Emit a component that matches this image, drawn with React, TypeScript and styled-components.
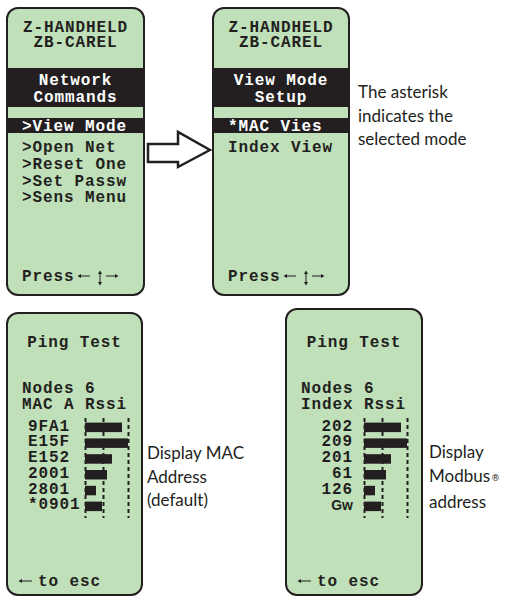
import styled, { createGlobalStyle } from "styled-components";

const INK = "#231f20";
const LCD = "#bfe0b9";

const GlobalStyle = createGlobalStyle`
  html, body {
    margin: 0;
    padding: 0;
    background: #fff;
  }
`;

const Page = styled.div`
  box-sizing: border-box;
  width: 507px;
  height: 598px;
  padding: 7px 0 0 6px;
  display: flex;
  flex-direction: column;
  gap: 12px;
  overflow: hidden;
`;

const Row = styled.div`
  display: flex;
  align-items: flex-start;
`;

const Screen = styled.div<{ $w: number; $h: number; $top?: number }>`
  box-sizing: border-box;
  flex: none;
  width: ${(p) => p.$w}px;
  height: ${(p) => p.$h}px;
  margin-top: ${(p) => p.$top ?? 0}px;
  border: 2px solid ${INK};
  border-radius: 12px;
  background: ${LCD};
  display: flex;
  flex-direction: column;
  font-family: "Liberation Mono", "Courier New", monospace;
  font-weight: 700;
  font-size: 16px;
  letter-spacing: 0.9px;
  color: ${INK};
  white-space: pre;
  overflow: hidden;
`;

const Title = styled.div`
  padding-top: 12px;
  line-height: 14.5px;
  text-align: center;
`;

const Band = styled.div`
  box-sizing: border-box;
  margin-top: 18px;
  height: 39px;
  padding-top: 5px;
  background: ${INK};
  color: #fff;
  line-height: 16.5px;
  text-align: center;
`;

const Selected = styled.div`
  box-sizing: border-box;
  margin-top: 11px;
  height: 15px;
  padding: 2px 0 0 14px;
  background: ${INK};
  color: #fff;
  line-height: 15px;
`;

const Menu = styled.div`
  margin-top: 7px;
  padding-left: 14px;
  line-height: 16.8px;
`;

const Footer = styled.div<{ $left?: number }>`
  margin-top: auto;
  margin-bottom: ${(p) => (p.$left ? 4 : 9)}px;
  height: 16px;
  padding-left: ${(p) => p.$left ?? 14}px;
  line-height: 16px;

  svg {
    display: inline-block;
  }
`;

const Heading = styled.div<{ $pad: number }>`
  padding-top: ${(p) => p.$pad}px;
  line-height: 16px;
  text-align: center;
`;

const Info = styled.div`
  margin-top: 30px;
  padding-left: 14px;
  line-height: 16px;
`;

const Chart = styled.div`
  margin-top: 5px;
  padding-left: 14px;
  display: flex;
  align-items: flex-start;
`;

const Labels = styled.div<{ $right?: boolean }>`
  box-sizing: border-box;
  width: 62px;
  padding-top: 1.5px;
  padding-left: ${(p) => (p.$right ? 0 : 6)}px;
  padding-right: ${(p) => (p.$right ? 10 : 0)}px;
  text-align: ${(p) => (p.$right ? "right" : "left")};
  line-height: 15.8px;
`;

const SansLabel = styled.span`
  font-family: "Liberation Sans", Arial, sans-serif;
  font-size: 14px;
  letter-spacing: 0;
`;

const ArrowBox = styled.div`
  flex: none;
  width: 67px;
  margin-top: 120px;
`;

const Note = styled.div<{ $top: number; $left: number; $w?: number }>`
  box-sizing: border-box;
  flex: none;
  width: ${(p) => (p.$w ? `${p.$w}px` : "auto")};
  margin-top: ${(p) => p.$top}px;
  margin-left: ${(p) => p.$left}px;
  font-family: Lato, "Open Sans", sans-serif;
  font-size: 17px;
  line-height: 23.5px;
  color: ${INK};
`;

const Reg = styled.span`
  font-family: "DejaVu Sans", sans-serif;
  font-size: 9px;
  vertical-align: 1px;
  margin-left: 1px;
`;

type Reading = { id: string; rssi: number; sans?: boolean };

const macRows: Reading[] = [
  { id: "9FA1", rssi: 37 },
  { id: "E15F", rssi: 43 },
  { id: "E152", rssi: 27 },
  { id: "2001", rssi: 22 },
  { id: "2801", rssi: 11 },
  { id: "*0901", rssi: 17 },
];

const indexRows: Reading[] = [
  { id: "202", rssi: 37 },
  { id: "209", rssi: 43 },
  { id: "201", rssi: 27 },
  { id: "61", rssi: 22 },
  { id: "126", rssi: 11 },
  { id: "Gw", rssi: 17, sans: true },
];

const KeysHint = () => (
  <svg width="42" height="16" viewBox="0 0 42 16" style={{ verticalAlign: "-5px", marginLeft: 2 }}>
    <g stroke={INK} strokeWidth="1" fill="none">
      <line x1="3" y1="6" x2="13" y2="6" />
      <line x1="23" y1="3" x2="23" y2="13" />
      <line x1="29" y1="6" x2="39" y2="6" />
    </g>
    <g fill={INK}>
      <polygon points="0.5,6 4,4 4,8" />
      <polygon points="41.5,6 38,4 38,8" />
      <polygon points="23,0.5 21,4 25,4" />
      <polygon points="23,15.5 21,12 25,12" />
    </g>
  </svg>
);

const BackHint = () => (
  <svg width="14" height="8" viewBox="0 0 14 8" style={{ verticalAlign: "1.5px", marginRight: 6 }}>
    <line x1="3" y1="4" x2="14" y2="4" stroke={INK} strokeWidth="1" />
    <polygon points="0.5,4 4,2 4,6" fill={INK} />
  </svg>
);

const RssiBars = ({ rows }: { rows: Reading[] }) => (
  <svg width="47" height="100" viewBox="0 0 47 100">
    {[1.5, 19.5, 44.5].map((x) => (
      <line key={x} x1={x} y1="0" x2={x} y2="100" stroke={INK} strokeWidth="2" strokeDasharray="4 3" />
    ))}
    {rows.map((r, i) => (
      <rect key={r.id} x="1" y={4.6 + i * 15.8} width={r.rssi} height="9.5" fill={INK} />
    ))}
  </svg>
);

const PingScreen = ({
  w,
  h,
  top,
  pad,
  column,
  rows,
  right,
}: {
  w: number;
  h: number;
  top: number;
  pad: number;
  column: string;
  rows: Reading[];
  right?: boolean;
}) => (
  <Screen $w={w} $h={h} $top={top}>
    <Heading $pad={pad}>Ping Test</Heading>
    <Info>
      {"Nodes 6"}
      <br />
      {column}
    </Info>
    <Chart>
      <Labels $right={right}>
        {rows.map((r) => (
          <div key={r.id}>{r.sans ? <SansLabel>{r.id}</SansLabel> : r.id}</div>
        ))}
      </Labels>
      <RssiBars rows={rows} />
    </Chart>
    <Footer $left={10}>
      <BackHint />
      to esc
    </Footer>
  </Screen>
);

export default function App() {
  return (
    <>
      <GlobalStyle />
      <Page>
        <Row>
          <Screen $w={139} $h={289}>
            <Title>
              {"Z-HANDHELD"}
              <br />
              {"ZB-CAREL"}
            </Title>
            <Band>
              {"Network"}
              <br />
              {"Commands"}
            </Band>
            <Selected>{">View Mode"}</Selected>
            <Menu>
              {">Open Net"}
              <br />
              {">Reset One"}
              <br />
              {">Set Passw"}
              <br />
              {">Sens Menu"}
            </Menu>
            <Footer>
              Press
              <KeysHint />
            </Footer>
          </Screen>
          <ArrowBox>
            <svg width="67" height="45" viewBox="0 0 67 45">
              <polygon
                points="3,17 33,17 33,5 65,23 33,40 33,35 3,35"
                fill="#fff"
                stroke={INK}
                strokeWidth="2.5"
                strokeLinejoin="miter"
              />
            </svg>
          </ArrowBox>
          <Screen $w={138} $h={289}>
            <Title>
              {"Z-HANDHELD"}
              <br />
              {"ZB-CAREL"}
            </Title>
            <Band>
              {"View Mode"}
              <br />
              {"Setup"}
            </Band>
            <Selected>{"*MAC Vies"}</Selected>
            <Menu>{"Index View"}</Menu>
            <Footer>
              Press
              <KeysHint />
            </Footer>
          </Screen>
          <Note $top={73} $left={8}>
            The asterisk
            <br />
            indicates the
            <br />
            selected mode
          </Note>
        </Row>
        <Row>
          <PingScreen w={137} h={284} top={4} pad={21} column="MAC A Rssi" rows={macRows} />
          <Note $top={133} $left={4} $w={138}>
            Display MAC
            <br />
            Address
            <br />
            (default)
          </Note>
          <PingScreen w={138} h={288} top={0} pad={25} column="Index Rssi" rows={indexRows} right />
          <Note $top={132} $left={6}>
            Display
            <br />
            Modbus<Reg>{"\u00AE\uFE0E"}</Reg>
            <br />
            address
          </Note>
        </Row>
      </Page>
    </>
  );
}
